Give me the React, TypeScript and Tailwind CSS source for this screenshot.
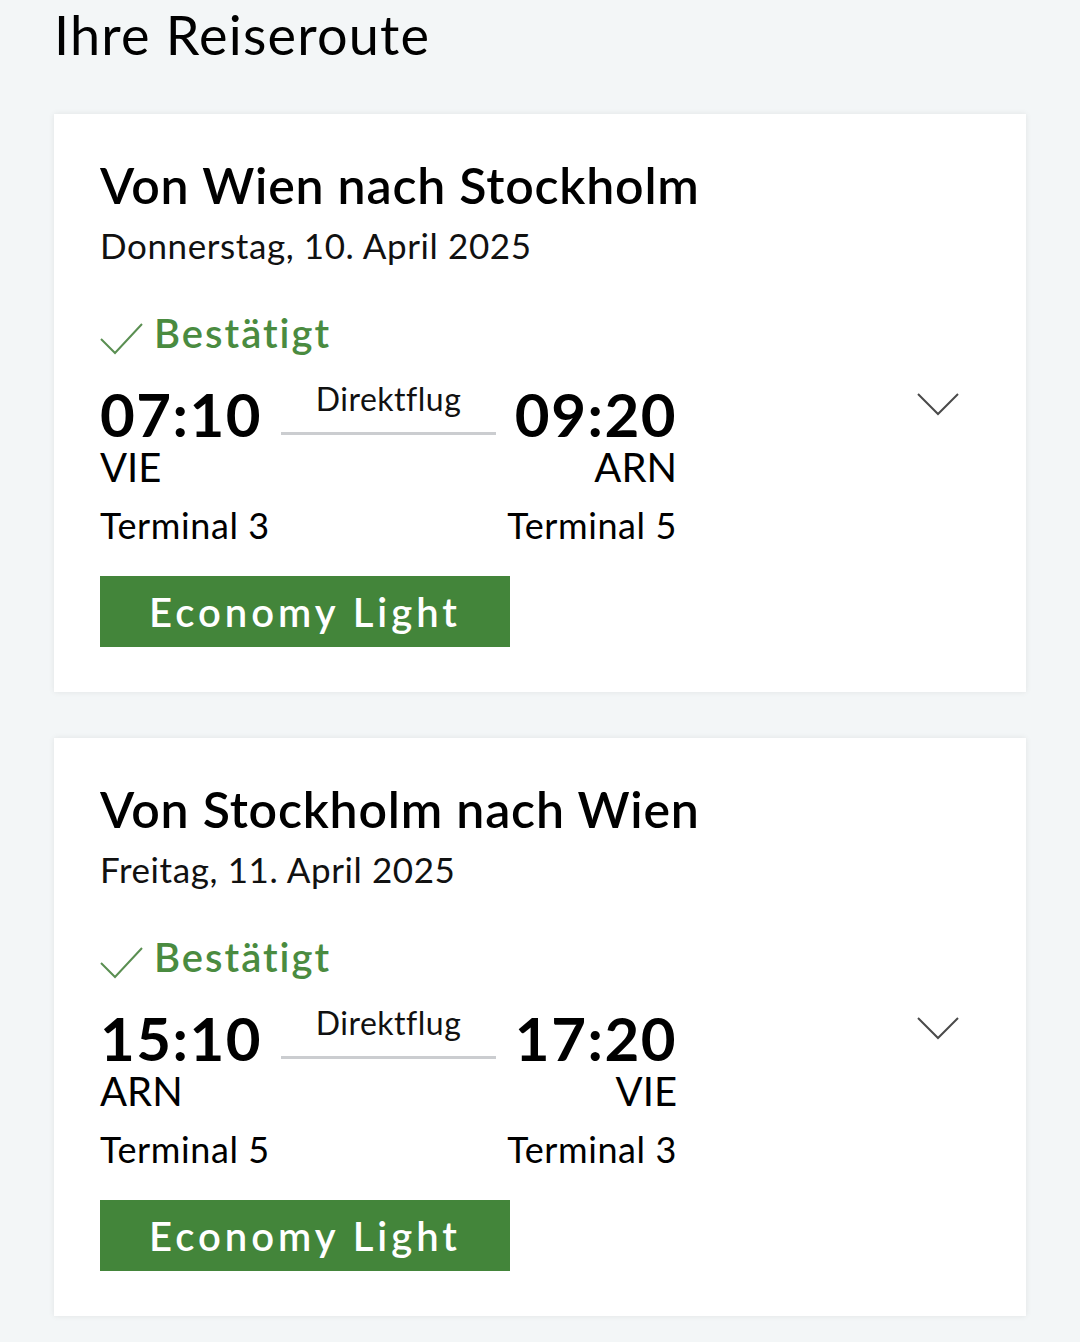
import React from "react";

type Flight = {
  title: string;
  date: string;
  dep: string;
  arr: string;
  from: string;
  to: string;
  tFrom: string;
  tTo: string;
};

const flights: Flight[] = [
  {
    title: "Von Wien nach Stockholm",
    date: "Donnerstag, 10. April 2025",
    dep: "07:10",
    arr: "09:20",
    from: "VIE",
    to: "ARN",
    tFrom: "Terminal 3",
    tTo: "Terminal 5",
  },
  {
    title: "Von Stockholm nach Wien",
    date: "Freitag, 11. April 2025",
    dep: "15:10",
    arr: "17:20",
    from: "ARN",
    to: "VIE",
    tFrom: "Terminal 5",
    tTo: "Terminal 3",
  },
];

function Card({ f }: { f: Flight }) {
  return (
    <div className="bg-white shadow-[0_0_6px_rgba(0,0,0,0.08)] pl-[46px] pr-[66px] pt-[40px] pb-[45px]">
      <div className="text-[50px] leading-[62px] font-semibold text-black tracking-[0.8px]">{f.title}</div>
      <div className="text-[35px] leading-[42px] text-[#111] mt-[8px] tracking-[0.6px]">{f.date}</div>
      <div className="flex items-center mt-[42px] h-[50px]">
        <svg width="44" height="34" viewBox="0 0 44 34" className="mt-[10px] mr-[10px]">
          <path d="M1 18 L15 32 L42 3" fill="none" stroke="#5a8f52" strokeWidth="2" />
        </svg>
        <span className="text-[40px] font-semibold text-[#4a8b40] tracking-[2px]">Bestätigt</span>
      </div>
      <div className="flex items-start mt-[21px]">
        <div className="flex flex-col">
          <div className="flex items-start">
            <div className="text-[60px] leading-[60px] mt-[5px] font-bold text-black tracking-[1.5px] w-[170px]">{f.dep}</div>
            <div className="flex flex-col items-center w-[215px] ml-[11px]">
              <div className="text-[32px] leading-[40px] text-[#111] tracking-[0.5px]">Direktflug</div>
              <div className="h-[3px] w-full bg-[#cbcdd0] mt-[13px]" />
            </div>
            <div className="text-[60px] leading-[60px] mt-[5px] font-bold text-black tracking-[1.5px] w-[181px] text-right">{f.arr}</div>
          </div>
          <div className="flex justify-between text-[40px] leading-[46px] text-black mt-0">
            <span>{f.from}</span>
            <span>{f.to}</span>
          </div>
          <div className="flex justify-between text-[36px] leading-[46px] text-black mt-[12px] tracking-[0.6px]">
            <span>{f.tFrom}</span>
            <span>{f.tTo}</span>
          </div>
        </div>
        <div className="flex-1" />
        <svg width="44" height="26" viewBox="0 0 44 26" className="mt-[13px]">
          <path d="M2 2 L22 22 L42 2" fill="none" stroke="#4a4a4a" strokeWidth="2" />
        </svg>
      </div>
      <div className="mt-[28px] w-[410px] h-[71px] bg-[#43853a] flex items-center justify-center">
        <span className="text-[40px] font-semibold text-white tracking-[4px]">Economy Light</span>
      </div>
    </div>
  );
}

export default function App() {
  return (
    <div
      className="w-[1080px] h-[1342px] bg-[#f3f6f7] overflow-hidden pl-[54px] pr-[54px]"
      style={{ fontFamily: "Lato, 'Noto Sans', sans-serif" }}
    >
      <div className="text-[54px] leading-[70px] text-black pt-0 tracking-[1.2px]">Ihre Reiseroute</div>
      <div className="flex flex-col gap-[46px] mt-[44px]">
        {flights.map((f) => (
          <Card key={f.title} f={f} />
        ))}
      </div>
    </div>
  );
}
